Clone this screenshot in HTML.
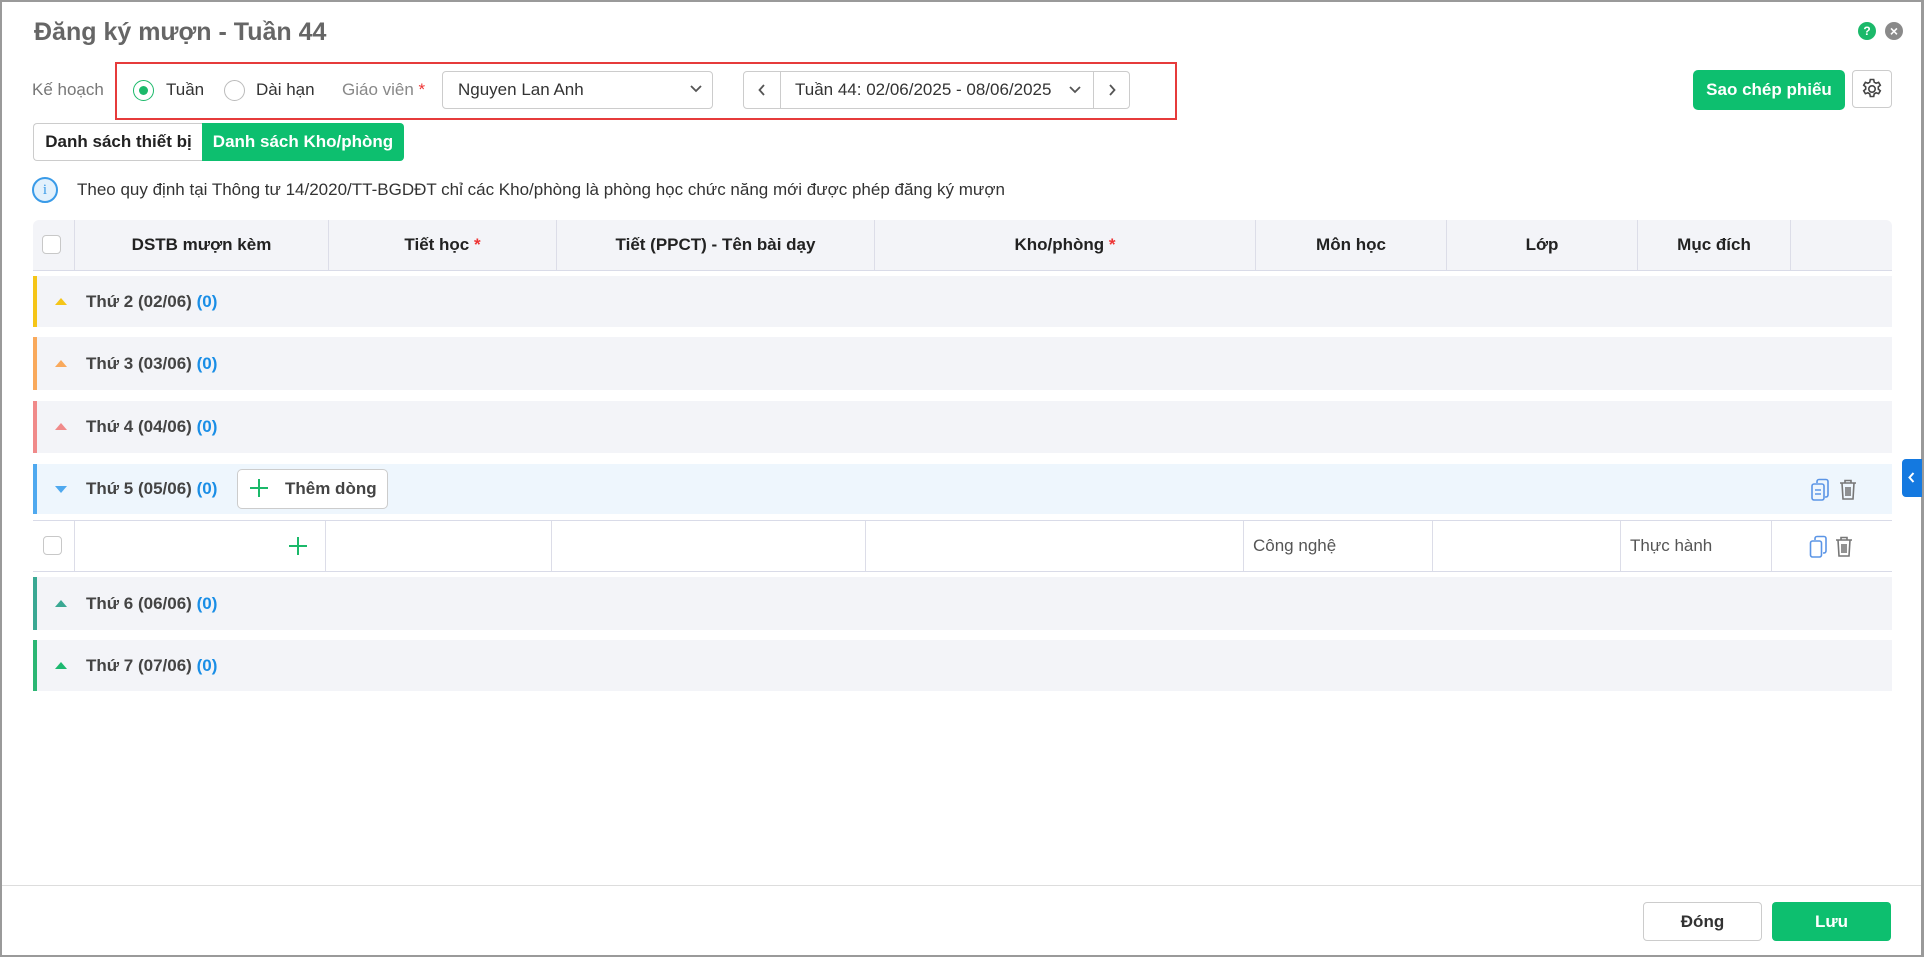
<!DOCTYPE html>
<html><head><meta charset="utf-8"><style>
*{box-sizing:border-box;margin:0;padding:0}
body{width:1924px;height:957px;background:#fff;font-family:"Liberation Sans",Arial,sans-serif;position:relative;overflow:hidden;color:#222}
.a{position:absolute}
.frame{left:0;top:0;width:1924px;height:957px;border:2px solid #9a9a9a;border-right-width:3px}
.t{font-size:17px;white-space:nowrap}
.hdr{left:33px;top:220px;width:1859px;height:51px;background:#f3f4f8;border-bottom:1px solid #d9dbe8;border-radius:6px 6px 0 0}
.hc{position:absolute;top:0;height:50px;border-left:1px solid #dcdde8;font-weight:bold;font-size:17px;display:flex;align-items:center;justify-content:center;color:#222}
.grp{left:33px;width:1859px;background:#f3f4f8;border-left:4px solid}
.grp .lbl{position:absolute;left:49px;top:50%;transform:translateY(-50%);font-weight:bold;font-size:17px;color:#444;white-space:nowrap}
.grp .lbl span{color:#1a8ee6}
.tri{position:absolute;left:18px;top:50%;width:0;height:0;border-left:6px solid transparent;border-right:6px solid transparent}
.up{border-bottom:7px solid;margin-top:-4px}
.dn{border-top:7px solid;margin-top:-3px}
.dc{position:absolute;top:0;height:50px;border-left:1px solid #dcdde8}
.cb{width:19px;height:19px;border:1px solid #c8c8c8;border-radius:4px;background:#fff}
</style></head><body>
<div class="a frame"></div>
<div class="a" style="left:34px;top:18px;font-size:25px;font-weight:bold;color:#666;white-space:nowrap">Đăng ký mượn - Tuần 44</div>
<div class="a" style="left:1858px;top:22px;width:18px;height:18px;border-radius:50%;background:#1bb96a;color:#fff;font-size:12px;font-weight:bold;text-align:center;line-height:18px">?</div>
<div class="a" style="left:1885px;top:22px;width:18px;height:18px;border-radius:50%;background:#8a8a8a;color:#fff;font-size:14px;font-weight:bold;text-align:center;line-height:18px">×</div>

<div class="a t" style="left:32px;top:80px;color:#777">Kế hoạch</div>
<div class="a" style="left:115px;top:62px;width:1062px;height:58px;border:2px solid #e63b3b"></div>
<div class="a" style="left:133px;top:80px;width:21px;height:21px;border-radius:50%;border:1.5px solid #1bb96a"></div>
<div class="a" style="left:139px;top:86px;width:9px;height:9px;border-radius:50%;background:#1bb96a"></div>
<div class="a t" style="left:166px;top:80px;color:#333">Tuần</div>
<div class="a" style="left:224px;top:80px;width:21px;height:21px;border-radius:50%;border:1px solid #bbb"></div>
<div class="a t" style="left:256px;top:80px;color:#333">Dài hạn</div>
<div class="a t" style="left:342px;top:80px;color:#888">Giáo viên <span style="color:#e33">*</span></div>
<div class="a" style="left:442px;top:71px;width:271px;height:38px;border:1px solid #ccc;border-radius:4px"></div>
<div class="a t" style="left:458px;top:80px;color:#333">Nguyen Lan Anh</div>
<svg class="a" style="left:690px;top:85px" width="12" height="8"><path d="M1 1l5 5 5-5" fill="none" stroke="#555" stroke-width="1.8"/></svg>
<div class="a" style="left:743px;top:71px;width:387px;height:38px;border:1px solid #ccc;border-radius:4px"></div>
<div class="a" style="left:780px;top:71px;width:1px;height:38px;background:#ccc"></div>
<div class="a" style="left:1093px;top:71px;width:1px;height:38px;background:#ccc"></div>
<svg class="a" style="left:758px;top:84px" width="8" height="12"><path d="M6 1L1.5 6 6 11" fill="none" stroke="#555" stroke-width="1.8"/></svg>
<svg class="a" style="left:1108px;top:84px" width="8" height="12"><path d="M2 1l4.5 5L2 11" fill="none" stroke="#555" stroke-width="1.8"/></svg>
<div class="a t" style="left:795px;top:80px;color:#333;width:263px;overflow:hidden">Tuần 44: 02/06/2025 - 08/06/2025</div>
<svg class="a" style="left:1069px;top:86px" width="12" height="8"><path d="M1 1l5 5 5-5" fill="none" stroke="#555" stroke-width="1.8"/></svg>

<div class="a" style="left:1693px;top:70px;width:152px;height:40px;background:#0dbf6f;border-radius:5px;color:#fff;font-weight:bold;font-size:17px;text-align:center;line-height:40px;white-space:nowrap">Sao chép phiếu</div>
<div class="a" style="left:1852px;top:70px;width:40px;height:38px;border:1px solid #ccc;border-radius:4px"></div>
<svg class="a" style="left:1860px;top:77px" width="24" height="24" viewBox="0 0 24 24" fill="none" stroke="#444" stroke-width="1.6"><circle cx="12" cy="12" r="3.2"/><path d="M10.3 2.5h3.4l.5 2.6 1.9 1.1 2.5-.9 1.7 2.9-2 1.7v2.2l2 1.7-1.7 2.9-2.5-.9-1.900 1.1-.5 2.6h-3.4l-.5-2.6-1.9-1.1-2.5.9-1.7-2.9 2-1.7v-2.2l-2-1.7 1.7-2.9 2.5.9 1.9-1.1z"/></svg>

<div class="a" style="left:33px;top:123px;width:170px;height:38px;border:1px solid #ccc;border-right:none;border-radius:4px 0 0 4px;font-weight:bold;font-size:17px;text-align:center;line-height:36px;color:#222;white-space:nowrap">Danh sách thiết bị</div>
<div class="a" style="left:202px;top:123px;width:202px;height:38px;background:#0dbf6f;border-radius:0 4px 4px 0;color:#fff;font-weight:bold;font-size:17px;text-align:center;line-height:38px;white-space:nowrap">Danh sách Kho/phòng</div>

<div class="a" style="left:32px;top:177px;width:26px;height:26px;border-radius:50%;border:2px solid #3a9be8;background:#e3f1fc;color:#3a9be8;font-size:15px;text-align:center;line-height:22px;font-family:'Liberation Serif',serif">i</div>
<div class="a t" style="left:77px;top:180px;color:#333">Theo quy định tại Thông tư 14/2020/TT-BGDĐT chỉ các Kho/phòng là phòng học chức năng mới được phép đăng ký mượn</div>

<div class="a hdr">
<div class="cb" style="position:absolute;left:9px;top:15px"></div>
<div class="hc" style="left:41px;width:254px">DSTB mượn kèm</div>
<div class="hc" style="left:295px;width:228px">Tiết học&nbsp;<span style="color:#e33">*</span></div>
<div class="hc" style="left:523px;width:318px">Tiết (PPCT) - Tên bài dạy</div>
<div class="hc" style="left:841px;width:381px">Kho/phòng&nbsp;<span style="color:#e33">*</span></div>
<div class="hc" style="left:1222px;width:191px">Môn học</div>
<div class="hc" style="left:1413px;width:191px">Lớp</div>
<div class="hc" style="left:1604px;width:153px">Mục đích</div>
<div class="hc" style="left:1757px;width:102px"></div>
</div>

<div class="a grp" style="top:276px;height:51px;border-color:#f5c518"><div class="tri up" style="color:#f5c518"></div><div class="lbl">Thứ 2 (02/06) <span>(0)</span></div></div>
<div class="a grp" style="top:337px;height:53px;border-color:#f9a95c"><div class="tri up" style="color:#f9a95c"></div><div class="lbl">Thứ 3 (03/06) <span>(0)</span></div></div>
<div class="a grp" style="top:401px;height:52px;border-color:#f08a8a"><div class="tri up" style="color:#f08a8a"></div><div class="lbl">Thứ 4 (04/06) <span>(0)</span></div></div>
<div class="a grp" style="top:464px;height:50px;border-color:#4fa9ef;background:#eef6fd"><div class="tri dn" style="color:#4fa9ef"></div><div class="lbl">Thứ 5 (05/06) <span>(0)</span></div>
<div style="position:absolute;left:200px;top:5px;width:151px;height:40px;border:1px solid #ccc;border-radius:5px;background:#fff;font-weight:bold;font-size:17px;color:#444;line-height:38px;padding-left:47px;white-space:nowrap">Thêm dòng</div>
<svg style="position:absolute;left:212px;top:14px" width="20" height="20"><path d="M10 1v18M1 10h18" stroke="#1bb96a" stroke-width="2"/></svg>
<svg style="position:absolute;left:1773px;top:14px" width="22" height="24" viewBox="0 0 22 24" fill="none" stroke="#5b95e6" stroke-width="1.6"><rect x="2" y="6" width="12" height="16" rx="2"/><path d="M7 5V3.5a2 2 0 012-2h7a2 2 0 012 2V17a2 2 0 01-2 2h-1M5 12h6M5 16h6"/></svg>
<svg style="position:absolute;left:1802px;top:15px" width="18" height="22" viewBox="0 0 18 22" fill="none" stroke="#777" stroke-width="1.6"><path d="M1 4h16M6 4V1.5h6V4M3 4l1 16h10l1-16M7 8v9M9 8v9M11 8v9"/></svg>
</div>

<div class="a" style="left:33px;top:520px;width:1859px;height:52px;border-top:1px solid #d9dbe8;border-bottom:1px solid #d9dbe8;background:#fff">
<div class="cb" style="position:absolute;left:10px;top:15px"></div>
<div class="dc" style="left:41px"></div><div class="dc" style="left:292px"></div><div class="dc" style="left:518px"></div><div class="dc" style="left:832px"></div><div class="dc" style="left:1210px"></div><div class="dc" style="left:1399px"></div><div class="dc" style="left:1587px"></div><div class="dc" style="left:1738px"></div>
<svg style="position:absolute;left:255px;top:15px" width="20" height="20"><path d="M10 1v18M1 10h18" stroke="#1bb96a" stroke-width="2"/></svg>
<div class="t" style="position:absolute;left:1220px;top:15px;color:#555">Công nghệ</div>
<div class="t" style="position:absolute;left:1597px;top:15px;color:#555">Thực hành</div>
<svg style="position:absolute;left:1776px;top:14px" width="20" height="24" viewBox="0 0 20 24" fill="none" stroke="#5b95e6" stroke-width="1.6"><rect x="1.5" y="6" width="11" height="16" rx="2"/><path d="M6 5V3.5a2 2 0 012-2h7a2 2 0 012 2V16a2 2 0 01-2 2h-1"/></svg>
<svg style="position:absolute;left:1802px;top:15px" width="18" height="22" viewBox="0 0 18 22" fill="none" stroke="#777" stroke-width="1.6"><path d="M1 4h16M6 4V1.5h6V4M3 4l1 16h10l1-16M7 8v9M9 8v9M11 8v9"/></svg>
</div>

<div class="a grp" style="top:577px;height:53px;border-color:#3aa893"><div class="tri up" style="color:#3aa893"></div><div class="lbl">Thứ 6 (06/06) <span>(0)</span></div></div>
<div class="a grp" style="top:640px;height:51px;border-color:#2bb673"><div class="tri up" style="color:#1db870"></div><div class="lbl">Thứ 7 (07/06) <span>(0)</span></div></div>

<div class="a" style="left:1902px;top:459px;width:20px;height:38px;background:#1479e0;border-radius:4px 0 0 4px"></div>
<svg class="a" style="left:1908px;top:472px" width="7" height="11"><path d="M5.5 1L1.5 5.5 5.5 10" fill="none" stroke="#fff" stroke-width="2"/></svg>

<div class="a" style="left:2px;top:885px;width:1919px;height:1px;background:#ddd"></div>
<div class="a" style="left:1643px;top:902px;width:119px;height:39px;border:1px solid #ccc;border-radius:4px;font-weight:bold;font-size:17px;text-align:center;line-height:37px;color:#333">Đóng</div>
<div class="a" style="left:1772px;top:902px;width:119px;height:39px;background:#0dbf6f;border-radius:4px;font-weight:bold;font-size:17px;text-align:center;line-height:39px;color:#fff">Lưu</div>
</body></html>
